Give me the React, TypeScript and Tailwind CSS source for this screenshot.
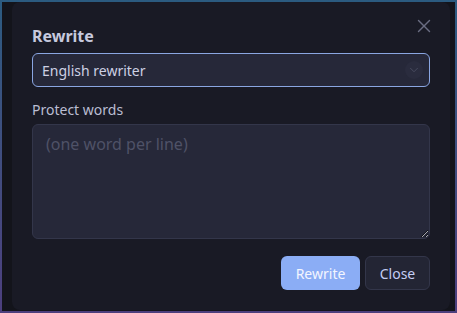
import { X, ChevronDown } from "lucide-react";

export default function App() {
  return (
    <div
      className="w-[457px] h-[313px] p-[2px] bg-gradient-to-b from-[#2b5b80] to-[#4c3f7d]"
      style={{ fontFamily: '"Noto Sans", "Open Sans", sans-serif' }}
    >
      <div className="flex h-full bg-[#13141b] pl-[10px] pr-[5px] pb-px">
        <div className="relative flex-1 flex flex-col rounded-lg bg-[#191a25] pl-[20px] pr-[20px] pt-[22px]">
          <button className="absolute right-[15px] top-[13px] text-[#6a6d82]">
            <X size={22} strokeWidth={1.5} />
          </button>
          <h2 className="text-[16px] leading-[24px] font-bold text-[#c6c9de]">Rewrite</h2>
          <div className="mt-[5px] flex h-[34px] items-center justify-between rounded-md border border-[#8aa6e2] bg-[#262839] pl-[9px] pr-[6px]">
            <span className="text-[14px] text-[#cdd0e4]">English rewriter</span>
            <span className="flex h-[18px] w-[18px] items-center justify-center rounded-full bg-[#2a2c3e] text-[#4c4f63]">
              <ChevronDown size={14} strokeWidth={1.5} />
            </span>
          </div>
          <label className="mt-[13px] text-[14px] leading-[20px] text-[#babdd2]">Protect words</label>
          <textarea
            placeholder="(one word per line)"
            className="mt-[4px] h-[115px] w-full resize-y rounded-md border border-[#33364a] bg-[#262839] px-[13px] py-[7px] text-[16px] text-[#cdd0e4] placeholder:text-[#4f5267] outline-none"
          />
          <div className="mt-[17px] flex justify-end gap-[5px]">
            <button className="h-[34px] w-[79px] rounded-md bg-[#8badf5] text-[14px] text-[#f3f6ff]">Rewrite</button>
            <button className="h-[34px] w-[65px] rounded-md border border-[#33364a] bg-[#232534] text-[14px] text-[#c3cdf3]">Close</button>
          </div>
        </div>
      </div>
    </div>
  );
}
